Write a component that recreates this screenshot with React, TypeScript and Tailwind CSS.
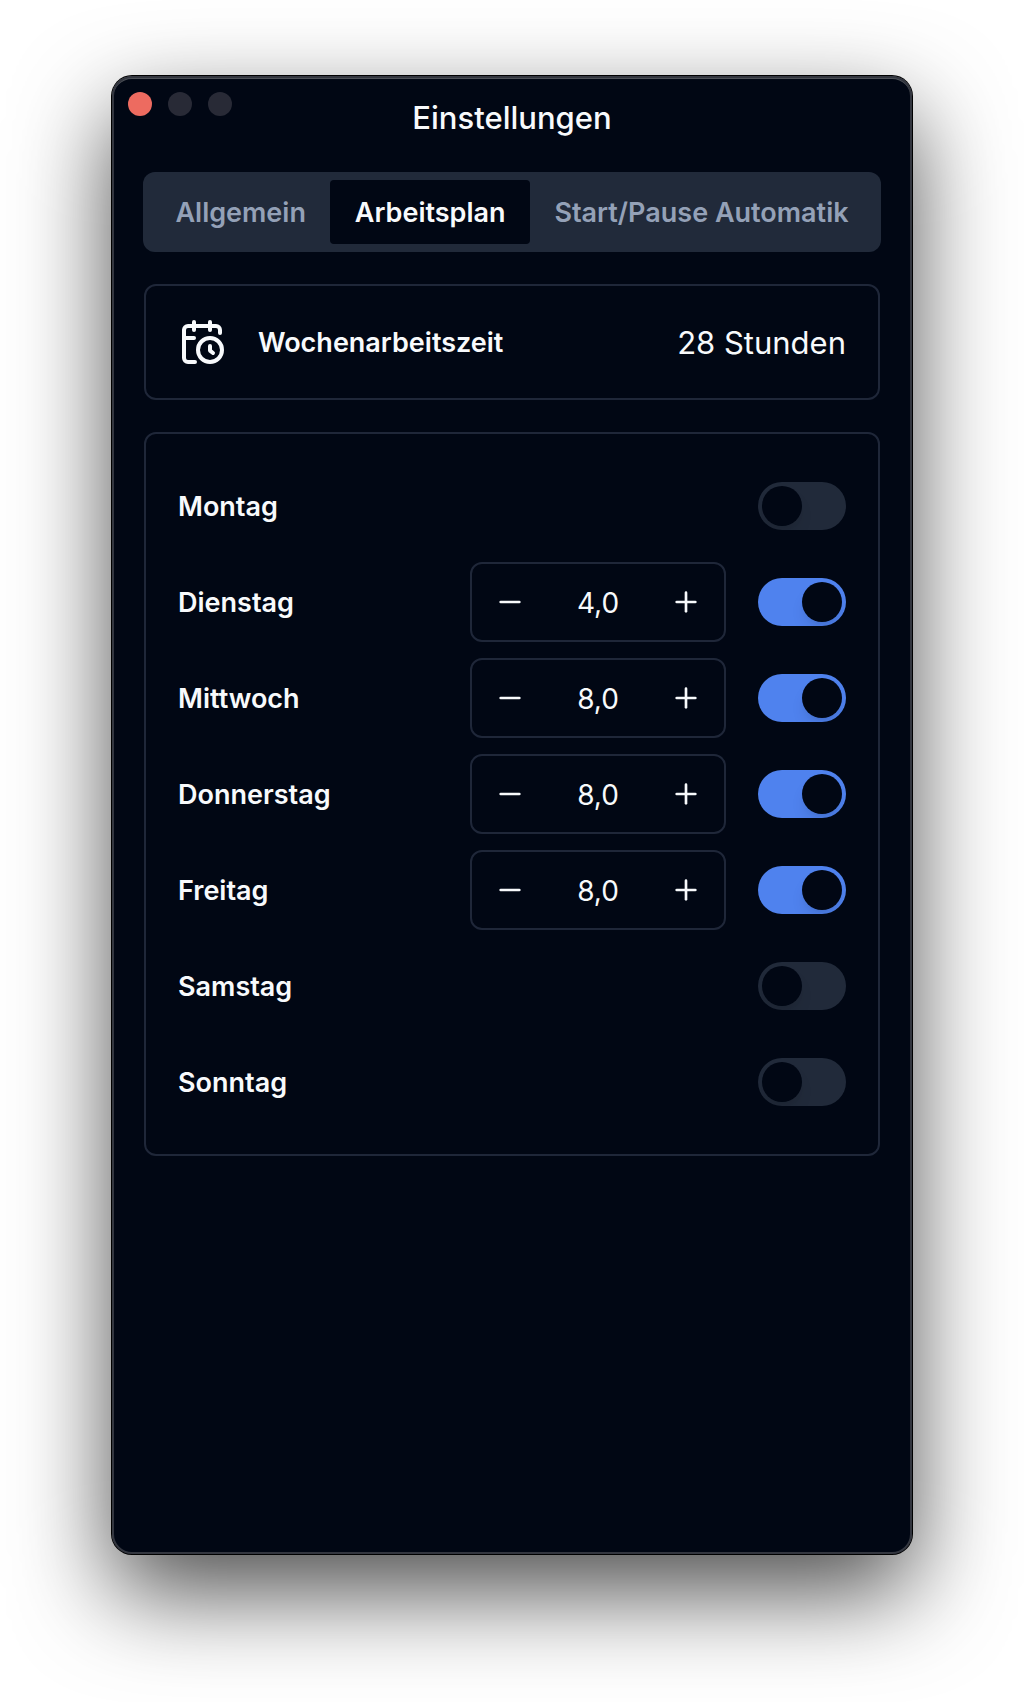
import { useState } from "react";
import { Minus, Plus } from "lucide-react";

type Day = { name: string; hours: number; active: boolean };

const initialDays: Day[] = [
  { name: "Montag", hours: 8, active: false },
  { name: "Dienstag", hours: 4, active: true },
  { name: "Mittwoch", hours: 8, active: true },
  { name: "Donnerstag", hours: 8, active: true },
  { name: "Freitag", hours: 8, active: true },
  { name: "Samstag", hours: 8, active: false },
  { name: "Sonntag", hours: 8, active: false },
];

const tabs = ["Allgemein", "Arbeitsplan", "Start/Pause Automatik"];

function CalendarClockIcon() {
  return (
    <svg
      className="size-12 shrink-0"
      viewBox="0 0 24 24"
      fill="none"
      stroke="currentColor"
      strokeWidth="2"
      strokeLinecap="round"
      strokeLinejoin="round"
      aria-hidden="true"
    >
      <path d="M21 7.5V6a2 2 0 0 0-2-2H5a2 2 0 0 0-2 2v14a2 2 0 0 0 2 2h3.5" />
      <path d="M16 2v4" />
      <path d="M8 2v4" />
      <path d="M3 10h5" />
      <path d="M17.5 17.5 16 16.3V14" />
      <circle cx="16" cy="16" r="6" />
    </svg>
  );
}

function WindowButtons() {
  return (
    <div className="absolute left-4 top-4 flex gap-4">
      <button type="button" aria-label="Schließen" className="size-6 rounded-full bg-[#ed6b60]" />
      <button type="button" aria-label="Minimieren" className="size-6 rounded-full bg-[#282a36]" />
      <button type="button" aria-label="Maximieren" className="size-6 rounded-full bg-[#282a36]" />
    </div>
  );
}

function HoursStepper({ day, onChange }: { day: Day; onChange: (hours: number) => void }) {
  return (
    <div className="flex h-20 w-64 items-center rounded-xl border-2 border-[#1f2739]">
      <button
        type="button"
        aria-label={`${day.name}: weniger Stunden`}
        onClick={() => onChange(Math.max(0, day.hours - 0.5))}
        className="flex h-full w-19 items-center justify-center"
      >
        <Minus className="size-8" />
      </button>
      <output className="flex-1 pt-0.5 text-center text-[28px] leading-8">
        {day.hours.toFixed(1).replace(".", ",")}
      </output>
      <button
        type="button"
        aria-label={`${day.name}: mehr Stunden`}
        onClick={() => onChange(Math.min(24, day.hours + 0.5))}
        className="flex h-full w-19 items-center justify-center"
      >
        <Plus className="size-8" />
      </button>
    </div>
  );
}

function DayRow({ day, onChange }: { day: Day; onChange: (day: Day) => void }) {
  const id = `day-${day.name.toLowerCase()}`;
  return (
    <li className="flex h-24 items-center gap-8">
      <label htmlFor={id} className="flex-1 pt-0.5 text-[27px] leading-8 font-semibold">
        {day.name}
      </label>
      {day.active && <HoursStepper day={day} onChange={(hours) => onChange({ ...day, hours })} />}
      <input
        id={id}
        type="checkbox"
        role="switch"
        checked={day.active}
        onChange={(event) => onChange({ ...day, active: event.target.checked })}
        className="flex h-12 w-22 shrink-0 cursor-pointer appearance-none items-center overflow-hidden rounded-full bg-[#212a3a] p-1 before:size-10 before:rounded-full before:bg-[#010714] before:shadow-lg before:content-[''] checked:bg-[#4f82ee] checked:before:translate-x-10"
      />
    </li>
  );
}

export default function App() {
  const [activeTab, setActiveTab] = useState("Arbeitsplan");
  const [days, setDays] = useState(initialDays);
  const total = days.reduce((sum, day) => sum + (day.active ? day.hours : 0), 0);

  return (
    <div className="flex min-h-screen flex-col bg-white px-28 pt-19 pb-37 font-['Inter',sans-serif] text-[#f8fafc]">
      <main className="relative flex flex-1 flex-col rounded-[20px] bg-[#010714] px-8 pb-8 shadow-[inset_0_0_0_2px_#33363f,inset_0_2px_0_1px_#4d5157,0_0_0_1px_#000000,0_38px_96px_0_rgba(0,0,0,0.7)]">
        <WindowButtons />
        <h1 className="pt-6.5 pb-9.5 text-center text-[31px] leading-8 font-medium">Einstellungen</h1>

        <div role="tablist" className="-mx-px flex h-20 rounded-xl bg-[#212a3a] p-2">
          {tabs.map((tab) => (
            <button
              key={tab}
              type="button"
              role="tab"
              aria-selected={tab === activeTab}
              onClick={() => setActiveTab(tab)}
              className="flex-auto rounded-sm px-4 pt-0.5 text-[27px] leading-8 font-semibold whitespace-nowrap text-[#94a1b7] aria-selected:bg-[#010714] aria-selected:text-[#f8fafc]"
            >
              {tab}
            </button>
          ))}
        </div>

        <section className="mt-8 flex items-center gap-8 rounded-xl border-2 border-[#1f2739] p-8">
          <CalendarClockIcon />
          <h2 className="flex-1 pt-0.5 text-[27px] leading-8 font-semibold">Wochenarbeitszeit</h2>
          <p className="pt-0.5 text-[31px] leading-8">{total.toLocaleString("de-DE")} Stunden</p>
        </section>

        <ul className="mt-8 rounded-xl border-2 border-[#1f2739] px-8 py-6">
          {days.map((day, index) => (
            <DayRow
              key={day.name}
              day={day}
              onChange={(next) => setDays(days.map((item, i) => (i === index ? next : item)))}
            />
          ))}
        </ul>
      </main>
    </div>
  );
}
